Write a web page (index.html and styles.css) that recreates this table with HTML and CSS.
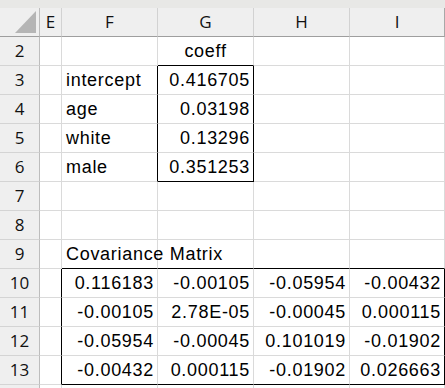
FILE: index.html
```html
<!DOCTYPE html>
<html>
<head>
<meta charset="utf-8">
<link rel="stylesheet" href="styles.css">
</head>
<body>
<div class="strip"></div>
<div class="sheet">
  <div class="corner"><svg width="40" height="28" viewBox="0 0 40 28"><polygon points="15,25 36,25 36,3" fill="#b5b5b5"/></svg></div>
  <div class="ch">E</div><div class="ch">F</div><div class="ch">G</div><div class="ch">H</div><div class="ch last">I</div>

  <div class="rh">2</div><div class="c"></div><div class="c"></div><div class="c ctr bB">coeff</div><div class="c"></div><div class="c"></div>
  <div class="rh">3</div><div class="c"></div><div class="c lbl bR">intercept</div><div class="c num bR">0.416705</div><div class="c"></div><div class="c"></div>
  <div class="rh">4</div><div class="c"></div><div class="c lbl bR">age</div><div class="c num bR">0.03198</div><div class="c"></div><div class="c"></div>
  <div class="rh">5</div><div class="c"></div><div class="c lbl bR">white</div><div class="c num bR">0.13296</div><div class="c"></div><div class="c"></div>
  <div class="rh">6</div><div class="c"></div><div class="c lbl bR">male</div><div class="c num bR bB">0.351253</div><div class="c"></div><div class="c"></div>
  <div class="rh">7</div><div class="c"></div><div class="c"></div><div class="c"></div><div class="c"></div><div class="c"></div>
  <div class="rh">8</div><div class="c"></div><div class="c"></div><div class="c"></div><div class="c"></div><div class="c"></div>
  <div class="rh">9</div><div class="c"></div><div class="c lbl bB span">Covariance Matrix</div><div class="c bB"></div><div class="c bB"></div><div class="c bB"></div>
  <div class="rh">10</div><div class="c bR"></div><div class="c num">0.116183</div><div class="c num">-0.00105</div><div class="c num">-0.05954</div><div class="c num bR">-0.00432</div>
  <div class="rh">11</div><div class="c bR"></div><div class="c num">-0.00105</div><div class="c num">2.78E-05</div><div class="c num">-0.00045</div><div class="c num bR">0.000115</div>
  <div class="rh">12</div><div class="c bR"></div><div class="c num">-0.05954</div><div class="c num">-0.00045</div><div class="c num">0.101019</div><div class="c num bR">-0.01902</div>
  <div class="rh">13</div><div class="c bR"></div><div class="c num bB">-0.00432</div><div class="c num bB">0.000115</div><div class="c num bB">-0.01902</div><div class="c num bR bB">0.026663</div>
  <div class="rh"></div><div class="c"></div><div class="c"></div><div class="c"></div><div class="c"></div><div class="c"></div>
</div>
</body>
</html>
```

FILE: styles.css
```css
html, body {
  margin: 0;
  padding: 0;
  background: #ffffff;
  overflow: hidden;
}
body {
  width: 445px;
  height: 388px;
}
.strip {
  height: 8px;
  background: #e8e8e6;
}
.sheet {
  display: grid;
  grid-template-columns: 40px 22px 96px 96px 96px 95px;
  grid-auto-rows: 29px;
}
.sheet > div {
  box-sizing: border-box;
  border-right: 1px solid #dadada;
  border-bottom: 1px solid #dadada;
  white-space: nowrap;
}
.corner {
  background: #efefef;
  border-right: 1px solid #bdbdbd !important;
  border-bottom: 1px solid #9e9e9e !important;
  overflow: hidden;
}
.corner svg {
  display: block;
}
.ch {
  background: #efefef;
  border-right: 1px solid #d2d2d2 !important;
  border-bottom: 1px solid #9e9e9e !important;
  font-family: "Open Sans", "Liberation Sans", sans-serif;
  font-size: 17px;
  line-height: 28px;
  color: #111;
  text-align: center;
}
.ch.last {
  border-right: 1px solid #a8a8a8 !important;
}
.rh {
  background: #efefef;
  border-right: 1px solid #bdbdbd !important;
  border-bottom: 1px solid #d4d4d4 !important;
  font-family: "Open Sans", "Liberation Sans", sans-serif;
  font-size: 17px;
  line-height: 28px;
  color: #111;
  text-align: center;
}
.c {
  font-family: "Liberation Sans", Arial, sans-serif;
  font-size: 18px;
  letter-spacing: 0.7px;
  line-height: 28px;
  color: #000;
}
.num {
  text-align: right;
  padding-right: 3px;
  padding-top: 1px;
  line-height: 27px;
}
.lbl {
  text-align: left;
  padding-left: 4px;
  padding-top: 1px;
  line-height: 27px;
}
.ctr {
  text-align: center;
  padding-top: 1px;
  line-height: 27px;
}
.span {
  overflow: visible;
  position: relative;
  z-index: 1;
}
.sheet > .bR {
  border-right: 1px solid #000;
}
.sheet > .bB {
  border-bottom: 1px solid #000;
}
```
